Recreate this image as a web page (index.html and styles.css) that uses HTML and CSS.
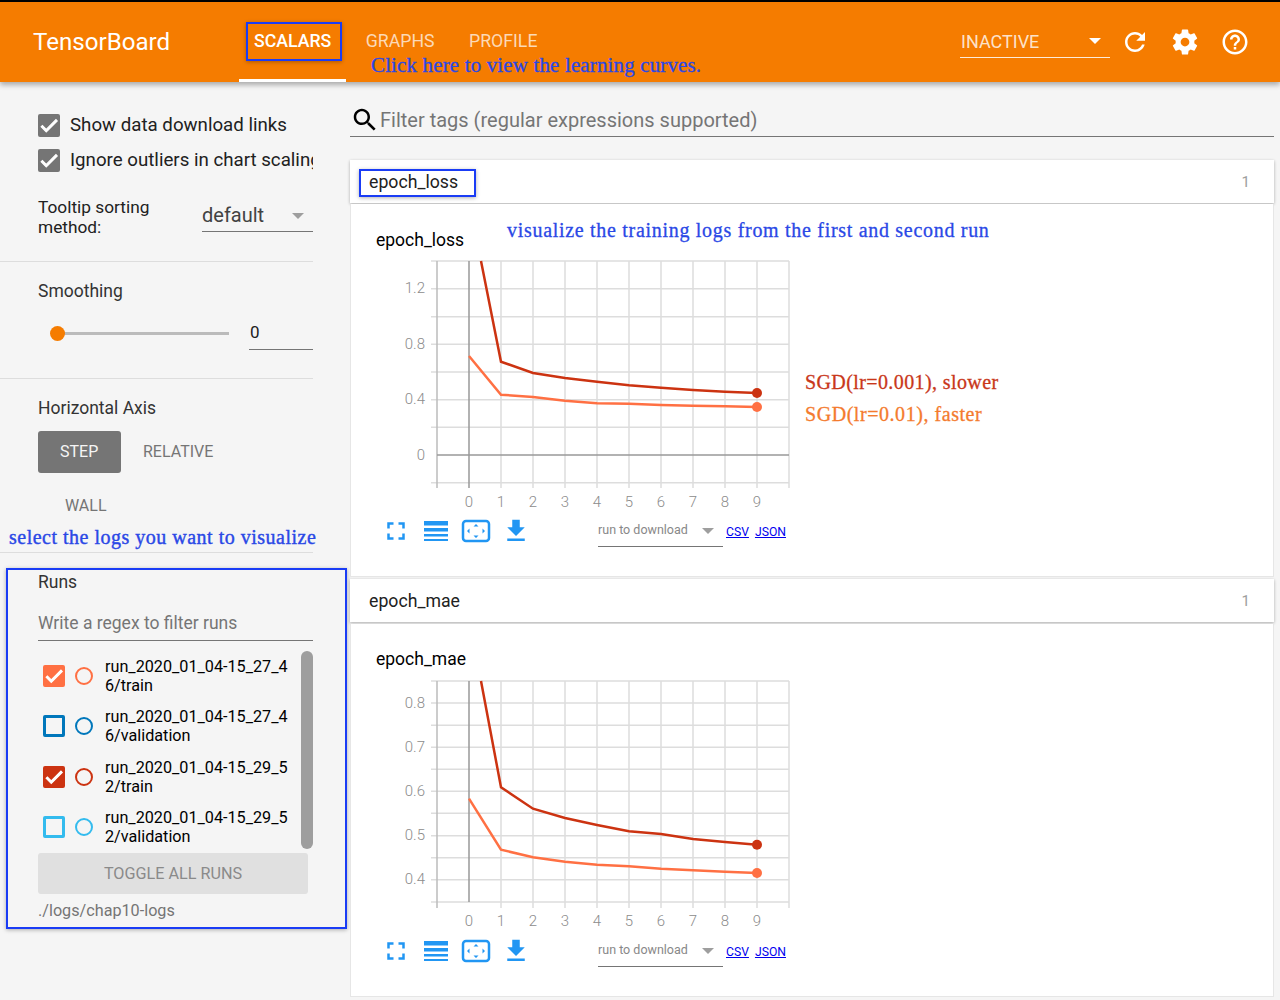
FILE: index.html
```html
<!DOCTYPE html>
<html lang="en">
<head>
    <meta charset="UTF-8">
    <title>TensorBoard</title>
    <link rel="stylesheet" href="styles.css">
</head>
<body>

<svg class="defs" width="0" height="0">
    <symbol id="i-check" viewBox="0 0 24 24"><path d="M9 16.170L4.830 12l-1.420 1.410L9 19 21 7l-1.410-1.410z"/></symbol>
    <symbol id="i-full" viewBox="0 0 24 24"><path d="M7 14H5v5h5v-2H7v-3zm-2-4h2V7h3V5H5v5zm12 7h-3v2h5v-5h-2v3zM14 5v2h3v3h2V5h-5z"/></symbol>
    <symbol id="i-lines" viewBox="0 0 24 20"><path d="M0 0h24v4.500H0zM0 7h24v3.500H0zM0 13h24v2.500H0zM0 18h24v2H0z"/></symbol>
    <symbol id="i-fit" viewBox="0 0 30 24"><rect x="2" y="2" width="26" height="20" rx="3" fill="none" stroke="currentColor" stroke-width="2.500"/><path d="M15 5l2.500 2.500h-5zM15 19l-2.500-2.500h5zM6 12l2.500-2.500v5zM24 12l-2.500 2.500v-5z"/></symbol>
    <symbol id="i-down" viewBox="0 0 24 24"><path d="M19 9h-4V3H9v6H5l7 7 7-7zM5 18v2h14v-2H5z"/></symbol>
</svg>

<header class="topbar">
    <div class="logo">TensorBoard</div>
    <nav class="tabs">
        <a class="tab active">SCALARS<span class="blue-box tab-box"></span></a>
        <a class="tab">GRAPHS</a>
        <a class="tab">PROFILE</a>
    </nav>
    <div class="note note-tabs">Click here to view the learning curves.</div>
    <div class="run-state">INACTIVE<span class="arrow white"></span></div>
    <svg class="top-icon first" viewBox="0 0 24 24"><path d="M17.65 6.35C16.2 4.9 14.21 4 12 4c-4.42 0-7.99 3.58-7.99 8s3.57 8 7.99 8c3.73 0 6.84-2.55 7.73-6h-2.08c-.82 2.33-3.04 4-5.65 4-3.31 0-6-2.69-6-6s2.69-6 6-6c1.66 0 3.14.69 4.22 1.78L13 11h7V4l-2.35 2.35z"/></svg>
    <svg class="top-icon" viewBox="0 0 24 24"><path d="M19.43 12.98c.04-.32.07-.64.07-.98s-.03-.66-.07-.98l2.11-1.65c.19-.15.24-.42.12-.64l-2-3.46c-.12-.22-.39-.3-.61-.22l-2.49 1c-.52-.4-1.08-.73-1.69-.98l-.38-2.65C14.46 2.18 14.25 2 14 2h-4c-.25 0-.46.18-.49.42l-.38 2.65c-.61.25-1.17.59-1.69.98l-2.49-1c-.23-.09-.49 0-.61.22l-2 3.46c-.13.22-.07.49.12.64l2.11 1.65c-.04.32-.07.65-.07.98s.03.66.07.98l-2.11 1.65c-.19.15-.24.42-.12.64l2 3.46c.12.22.39.3.61.22l2.49-1c.52.4 1.08.73 1.69.98l.38 2.65c.03.24.24.42.49.42h4c.25 0 .46-.18.49-.42l.38-2.65c.61-.25 1.17-.59 1.69-.98l2.49 1c.23.09.49 0 .61-.22l2-3.46c.12-.22.07-.49-.12-.64l-2.11-1.65zM12 15.5c-1.93 0-3.5-1.57-3.5-3.5s1.57-3.5 3.5-3.5 3.5 1.57 3.5 3.5-1.57 3.5-3.5 3.5z"/></svg>
    <svg class="top-icon" viewBox="0 0 24 24"><path d="M11 18h2v-2h-2v2zm1-16C6.48 2 2 6.48 2 12s4.48 10 10 10 10-4.48 10-10S17.52 2 12 2zm0 18c-4.41 0-8-3.59-8-8s3.59-8 8-8 8 3.59 8 8-3.59 8-8 8zm0-14c-2.21 0-4 1.79-4 4h2c0-1.1.9-2 2-2s2 .9 2 2c0 2-3 1.75-3 5h2c0-2.25 3-2.5 3-5 0-2.21-1.79-4-4-4z"/></svg>
</header>

<div class="page">
    <aside class="sidebar">
        <section class="side-section options">
            <label class="check-row"><span class="checkbox"><svg><use href="#i-check"/></svg></span><span class="check-text">Show data download links</span></label>
            <label class="check-row"><span class="checkbox"><svg><use href="#i-check"/></svg></span><span class="check-text">Ignore outliers in chart scaling</span></label>
            <div class="tooltip-row">
                <div class="tooltip-label">Tooltip sorting method:</div>
                <div class="tooltip-select">default<span class="arrow"></span></div>
            </div>
        </section>

        <section class="side-section smoothing">
            <div class="side-title">Smoothing</div>
            <div class="slider-row">
                <div class="slider"><span class="knob"></span></div>
                <div class="slider-value">0</div>
            </div>
        </section>

        <section class="side-section axis">
            <div class="side-title">Horizontal Axis</div>
            <div class="axis-buttons">
                <span class="axis-btn selected">STEP</span>
                <span class="axis-btn">RELATIVE</span>
                <span class="axis-btn">WALL</span>
            </div>
            <div class="note note-logs">select the logs you want to visualize</div>
        </section>

        <section class="side-section runs">
            <span class="blue-box runs-box"></span>
            <div class="side-title">Runs</div>
            <div class="run-filter">Write a regex to filter runs</div>
            <div class="run-list">
                <div class="run-items">
                    <div class="run">
                        <span class="run-check fill c-orange"><svg><use href="#i-check"/></svg></span>
                        <span class="run-dot c-orange"></span>
                        <span class="run-name">run_2020_01_04-15_27_46/train</span>
                    </div>
                    <div class="run">
                        <span class="run-check c-blue"></span>
                        <span class="run-dot c-blue"></span>
                        <span class="run-name">run_2020_01_04-15_27_46/validation</span>
                    </div>
                    <div class="run">
                        <span class="run-check fill c-red"><svg><use href="#i-check"/></svg></span>
                        <span class="run-dot c-red"></span>
                        <span class="run-name">run_2020_01_04-15_29_52/train</span>
                    </div>
                    <div class="run">
                        <span class="run-check c-sky"></span>
                        <span class="run-dot c-sky"></span>
                        <span class="run-name">run_2020_01_04-15_29_52/validation</span>
                    </div>
                </div>
                <div class="scrollbar"></div>
            </div>
            <div class="toggle-btn">TOGGLE ALL RUNS</div>
            <div class="log-dir">./logs/chap10-logs</div>
        </section>
    </aside>

    <main class="content">
        <div class="tag-filter">
            <svg class="search-icon" viewBox="0 0 24 24"><path d="M15.5 14h-.79l-.28-.27C15.41 12.59 16 11.11 16 9.500 16 5.910 13.090 3 9.500 3S3 5.910 3 9.500 5.910 16 9.500 16c1.610 0 3.090-.59 4.230-1.570l.27.28v.79l5 4.990L20.490 19l-4.990-5zm-6 0C7.010 14 5 11.990 5 9.500S7.010 5 9.500 5 14 7.010 14 9.500 11.990 14 9.500 14z"/></svg>
            Filter tags (regular expressions supported)
        </div>

        <!-- epoch_loss -->
        <div class="card-head">
            <span>epoch_loss</span>
            <span class="blue-box tag-box"></span>
            <span class="count">1</span>
        </div>
        <div class="card-body">
            <div class="chart-title">epoch_loss</div>
            <div class="note note-chart">visualize the training logs from the first and second run</div>
            <div class="note note-slow">SGD(lr=0.001), slower</div>
            <div class="note note-fast">SGD(lr=0.01), faster</div>
            <svg class="chart" viewBox="370 255 430 255">
                <g class="grid">
                    <path d="M431 261H789M431 288.700H789M431 316.700H789M431 344.300H789M431 372H789M431 399.700H789M431 427.300H789M431 482.700H789"/>
                    <path d="M501 261V488M533 261V488M565 261V488M597 261V488M629 261V488M661 261V488M693 261V488M725 261V488M757 261V488M789 261V488"/>
                </g>
                <path class="axis-side" d="M437 261V488"/>
                <path class="axis-zero" d="M469 261V488M437 455H789"/>
                <g class="y-labels">
                    <text x="425" y="293">1.2</text>
                    <text x="425" y="349">0.8</text>
                    <text x="425" y="404">0.4</text>
                    <text x="425" y="460">0</text>
                </g>
                <g class="x-labels">
                    <text x="469" y="507">0</text><text x="501" y="507">1</text><text x="533" y="507">2</text><text x="565" y="507">3</text><text x="597" y="507">4</text><text x="629" y="507">5</text><text x="661" y="507">6</text><text x="693" y="507">7</text><text x="725" y="507">8</text><text x="757" y="507">9</text>
                </g>
                <polyline class="line-red" points="481,261 501,361.700 533,373 565,378 597,381.700 629,385.300 661,387.700 693,390 725,391.700 757,393"/>
                <polyline class="line-orange" points="469,356 501,394.700 533,397 565,400.700 597,403.300 629,403.700 661,405 693,405.700 725,406.300 757,407"/>
                <circle class="dot-red" cx="757" cy="393" r="5"/>
                <circle class="dot-orange" cx="757" cy="407" r="5"/>
            </svg>
            <div class="chart-tools">
                <svg class="tool t-full"><use href="#i-full"/></svg>
                <svg class="tool t-lines"><use href="#i-lines"/></svg>
                <svg class="tool t-fit"><use href="#i-fit"/></svg>
                <svg class="tool t-down"><use href="#i-down"/></svg>
                <div class="download-select">run to download<span class="arrow"></span></div>
                <a class="dl-link first">CSV</a>
                <a class="dl-link">JSON</a>
            </div>
        </div>

        <!-- epoch_mae -->
        <div class="card-head second">
            <span>epoch_mae</span>
            <span class="count">1</span>
        </div>
        <div class="card-body">
            <div class="chart-title">epoch_mae</div>
            <svg class="chart" viewBox="370 675 430 255">
                <g class="grid">
                    <path d="M431 681H789M431 703H789M431 725.300H789M431 747.300H789M431 769.300H789M431 791.300H789M431 813.300H789M431 835.700H789M431 857.700H789M431 879.700H789M431 902H789"/>
                    <path d="M501 681V908M533 681V908M565 681V908M597 681V908M629 681V908M661 681V908M693 681V908M725 681V908M757 681V908M789 681V908"/>
                </g>
                <path class="axis-side" d="M437 681V908"/>
                <path class="axis-zero" d="M469 681V902"/>
                <g class="y-labels">
                    <text x="425" y="708">0.8</text>
                    <text x="425" y="752">0.7</text>
                    <text x="425" y="796">0.6</text>
                    <text x="425" y="840">0.5</text>
                    <text x="425" y="884">0.4</text>
                </g>
                <g class="x-labels">
                    <text x="469" y="926">0</text><text x="501" y="926">1</text><text x="533" y="926">2</text><text x="565" y="926">3</text><text x="597" y="926">4</text><text x="629" y="926">5</text><text x="661" y="926">6</text><text x="693" y="926">7</text><text x="725" y="926">8</text><text x="757" y="926">9</text>
                </g>
                <polyline class="line-red" points="481,681 501,787.300 533,808.700 565,818 597,825 629,831.300 661,834 693,839 725,842 757,844.700"/>
                <polyline class="line-orange" points="469,798.700 501,849.700 533,857.300 565,861.700 597,864.700 629,866.300 661,868.700 693,870.300 725,871.700 757,873"/>
                <circle class="dot-red" cx="757" cy="844.700" r="5"/>
                <circle class="dot-orange" cx="757" cy="873" r="5"/>
            </svg>
            <div class="chart-tools">
                <svg class="tool t-full"><use href="#i-full"/></svg>
                <svg class="tool t-lines"><use href="#i-lines"/></svg>
                <svg class="tool t-fit"><use href="#i-fit"/></svg>
                <svg class="tool t-down"><use href="#i-down"/></svg>
                <div class="download-select">run to download<span class="arrow"></span></div>
                <a class="dl-link first">CSV</a>
                <a class="dl-link">JSON</a>
            </div>
        </div>
    </main>
</div>

</body>
</html>
```

FILE: styles.css
```css
html, body {
    margin: 0;
    padding: 0;
    height: 1000px;
    overflow: hidden;
}
body {
    font-family: Roboto, "Liberation Sans", sans-serif;
    background-color: #f5f5f5;
    color: #212121;
}
.defs {
    position: absolute;
}

/* Top bar */
.topbar {
    position: relative;
    z-index: 2;
    display: flex;
    align-items: center;
    height: 80px;
    border-top: 2px solid #000;
    background-color: #f57c00;
    box-shadow: 0 3px 5px rgba(0, 0, 0, 0.3);
    color: #fff;
}
.logo {
    width: 239px;
    padding-left: 33px;
    box-sizing: border-box;
    font-size: 24.100px;
}
.tabs {
    display: flex;
    height: 80px;
}
.tab {
    position: relative;
    display: flex;
    align-items: center;
    height: 76px;
    padding: 1px 15px 0;
    margin-left: 4.500px;
    font-size: 17.700px;
    color: rgba(255, 255, 255, 0.72);
}
.tab.active {
    margin-left: 0;
    border-bottom: 3px solid #fff;
    color: #fff;
    font-weight: 500;
}
.run-state {
    position: relative;
    box-sizing: border-box;
    width: 150px;
    height: 30px;
    margin-left: auto;
    margin-right: 10px;
    margin-top: 2px;
    padding-top: 3px;
    padding-left: 1px;
    border-bottom: 1px solid rgba(255, 255, 255, 0.85);
    font-size: 18px;
    color: rgba(255, 255, 255, 0.8);
}
.top-icon {
    width: 30px;
    height: 30px;
    margin-right: 20px;
    fill: #fff;
}
.top-icon:last-child {
    margin-right: 30px;
}

/* little select arrow */
.arrow {
    position: absolute;
    right: 9px;
    top: 13px;
    border-left: 6px solid transparent;
    border-right: 6px solid transparent;
    border-top: 6px solid #9e9e9e;
}
.arrow.white {
    top: 10px;
    border-top-color: #fff;
}
.tooltip-select .arrow {
    top: 16px;
}

/* Blue hand drawn notes and boxes */
.blue-box {
    position: absolute;
    border: 2px solid #1a3cf5;
    box-shadow: 0 1px 4px rgba(0, 0, 0, 0.3);
    pointer-events: none;
}
.tab-box {
    left: 7px;
    top: 20px;
    width: 92px;
    height: 35px;
}
.tag-box {
    left: 9px;
    top: 9px;
    width: 113px;
    height: 24px;
}
.runs-box {
    left: 6px;
    top: 15px;
    width: 337px;
    height: 357px;
}
.note {
    position: absolute;
    font-family: "Liberation Serif", serif;
    white-space: nowrap;
    color: #2a48e6;
    -webkit-text-stroke: 0.3px;
}
.note-tabs {
    left: 371px;
    top: 51px;
    font-size: 21px;
    letter-spacing: 0.140px;
}
.note-logs {
    left: 9px;
    top: 147px;
    font-size: 20px;
    letter-spacing: 0.500px;
    -webkit-text-stroke: 0.4px;
}
.note-chart {
    left: 156px;
    top: 15px;
    font-size: 20px;
    letter-spacing: 0.700px;
}
.note-slow {
    left: 454px;
    top: 167px;
    font-size: 20px;
    letter-spacing: 0.400px;
    color: #c9371a;
}
.note-fast {
    left: 454px;
    top: 199px;
    font-size: 20px;
    letter-spacing: 0.550px;
    color: #f47b2e;
}

/* Layout */
.page {
    display: flex;
    height: 918px;
}
.sidebar {
    flex: 0 0 350px;
}
.side-section {
    position: relative;
    box-sizing: border-box;
    width: 313px;
    padding-left: 38px;
    border-bottom: 1px solid #ddd;
}
.side-title {
    font-size: 17.500px;
    line-height: 20px;
    color: #333;
}

/* Options */
.options {
    height: 180px;
    padding-top: 31px;
}
.check-row {
    display: flex;
    align-items: center;
    height: 24px;
    margin-bottom: 11px;
}
.checkbox {
    flex: none;
    width: 22px;
    height: 23px;
    border-radius: 2px;
    background-color: #757575;
}
.checkbox svg, .run-check svg {
    display: block;
    width: 100%;
    height: 100%;
    fill: #fff;
    stroke: #fff;
    stroke-width: 1.200;
}
.check-text {
    min-width: 0;
    margin-left: 10px;
    font-size: 18.700px;
    white-space: nowrap;
    overflow: hidden;
}
.tooltip-row {
    display: flex;
    margin-top: 25px;
}
.tooltip-label {
    width: 130px;
    margin-right: 34px;
    font-size: 17.300px;
    line-height: 20px;
}
.tooltip-select {
    position: relative;
    box-sizing: border-box;
    width: 111px;
    height: 35px;
    padding-top: 6px;
    border-bottom: 1px solid #757575;
    font-size: 20px;
    color: #424242;
}

/* Smoothing */
.smoothing {
    height: 117px;
    padding-top: 19px;
}
.slider-row {
    display: flex;
    margin-top: 22px;
}
.slider {
    position: relative;
    width: 172px;
    height: 3px;
    margin: 9px 0 0 19px;
    background-color: #bbb;
}
.knob {
    position: absolute;
    left: -7px;
    top: -6px;
    width: 15px;
    height: 15px;
    border-radius: 50%;
    background-color: #f57c00;
}
.slider-value {
    box-sizing: border-box;
    width: 64px;
    height: 38px;
    margin: -11px 0 0 20px;
    padding-top: 10px;
    padding-left: 1px;
    border-bottom: 1px solid #757575;
    font-size: 17px;
}

/* Horizontal axis */
.axis {
    height: 174px;
    padding-top: 19px;
}
.axis-buttons {
    display: flex;
    flex-wrap: wrap;
    margin-top: 13px;
}
.axis-btn {
    display: flex;
    align-items: center;
    box-sizing: border-box;
    height: 42px;
    padding: 0 22px 2px;
    margin-bottom: 12px;
    border-radius: 3px;
    font-size: 16px;
    color: #757575;
}
.axis-btn.selected {
    width: 83px;
    background-color: #757575;
    color: #f5f5f5;
}
.axis-btn:last-child {
    margin-left: 5px;
}

/* Runs */
.runs {
    border-bottom: none;
    padding-top: 19px;
}
.run-filter {
    height: 27px;
    margin-top: 21px;
    border-bottom: 1px solid #757575;
    font-size: 17.500px;
    color: #757575;
}
.run-list {
    display: flex;
    justify-content: space-between;
    height: 202px;
    margin-top: 10px;
}
.run-items {
    width: 256px;
}
.run {
    display: flex;
    align-items: center;
    height: 50.300px;
    padding-left: 5px;
}
.run-check {
    flex: none;
    box-sizing: border-box;
    width: 22px;
    height: 22px;
    border: 3px solid;
    border-radius: 2px;
}
.run-check.fill svg {
    width: 22px;
    height: 22px;
    margin: -3px;
}
.run-dot {
    flex: none;
    box-sizing: border-box;
    width: 18px;
    height: 18px;
    margin: 0 12px 0 10px;
    border: 2px solid;
    border-radius: 50%;
}
.run-name {
    width: 190px;
    font-size: 16.200px;
    line-height: 19px;
    color: #000;
    word-break: break-all;
}
.c-orange { color: #ff7043; }
.c-blue { color: #0077bb; }
.c-red { color: #cc3311; }
.c-sky { color: #33bbee; }
.run-check.c-orange { background-color: #ff7043; }
.run-check.c-red { background-color: #cc3311; }
.scrollbar {
    width: 12px;
    height: 198px;
    border-radius: 6px;
    background-color: #9e9e9e;
}
.toggle-btn {
    display: flex;
    align-items: center;
    justify-content: center;
    width: 270px;
    height: 41px;
    border-radius: 3px;
    background-color: #e0e0e0;
    font-size: 16.200px;
    color: #8a8a8a;
}
.log-dir {
    margin-top: 7px;
    font-size: 16.200px;
    color: #757575;
}

/* Main column */
.content {
    position: relative;
    width: 924px;
}
.tag-filter {
    display: flex;
    align-items: center;
    height: 30px;
    padding-bottom: 1px;
    margin-top: 23px;
    margin-bottom: 23px;
    border-bottom: 1px solid #757575;
    font-size: 20px;
    color: #757575;
}
.search-icon {
    width: 30px;
    height: 30px;
    fill: #000;
}
.card-head {
    position: relative;
    display: flex;
    align-items: center;
    justify-content: space-between;
    height: 43px;
    padding: 0 24px 0 19px;
    background-color: #fff;
    box-shadow: 0 1px 3px rgba(0, 0, 0, 0.3);
    font-size: 17.700px;
    color: #212121;
}
.card-head.second {
    margin-top: 2px;
}
.count {
    font-size: 15px;
    color: #9e9e9e;
}
.card-body {
    position: relative;
    box-sizing: border-box;
    height: 373px;
    margin-top: 1px;
    padding-left: 20px;
    background-color: #fff;
    border: 1px solid #e6e6e6;
    border-top: none;
}
.card-head.second + .card-body {
    margin-top: 2px;
}
.chart-title {
    height: 51px;
    padding: 25.500px 0 0 5px;
    box-sizing: border-box;
    font-size: 17.500px;
    color: #000;
}
.card-head.second + .card-body .chart-title {
    padding-top: 24.500px;
}
.chart {
    display: block;
    margin-left: -1px;
    width: 430px;
    height: 255px;
}
.grid path {
    stroke: #ddd;
    stroke-width: 1.500;
    fill: none;
}
.axis-side {
    stroke: #bbb;
    stroke-width: 1.500;
    fill: none;
}
.axis-zero {
    stroke: #999;
    stroke-width: 1.500;
    fill: none;
}
.y-labels text, .x-labels text {
    font-family: Roboto, sans-serif;
    font-weight: 300;
    font-size: 15px;
    fill: #8c8c8c;
}
.y-labels text {
    text-anchor: end;
}
.x-labels text {
    text-anchor: middle;
}
.line-red, .line-orange {
    fill: none;
    stroke-width: 2.500;
}
.line-red { stroke: #cc3311; }
.line-orange { stroke: #ff7043; }
.dot-red { fill: #cc3311; }
.dot-orange { fill: #ff7043; }

/* Chart toolbar */
.chart-tools {
    display: flex;
    align-items: center;
    height: 32px;
    margin-top: 5px;
    margin-left: -1px;
    padding-left: 11px;
}
.tool {
    flex: none;
    width: 30px;
    height: 30px;
    fill: #2196f3;
    color: #2196f3;
}
.t-lines {
    width: 24px;
    height: 20px;
    margin-left: 13px;
}
.t-fit {
    margin-left: 13px;
    width: 30px;
    height: 24px;
}
.t-down {
    margin-left: 10px;
}
.download-select {
    position: relative;
    box-sizing: border-box;
    width: 125px;
    height: 32px;
    margin-left: 67px;
    padding-top: 7px;
    border-bottom: 1px solid #757575;
    font-size: 12.500px;
    color: #888;
}
.dl-link {
    margin-left: 6px;
    margin-top: 2px;
    font-size: 12.200px;
    color: #00e;
    text-decoration: underline;
}
.dl-link.first {
    margin-left: 3px;
}
```
